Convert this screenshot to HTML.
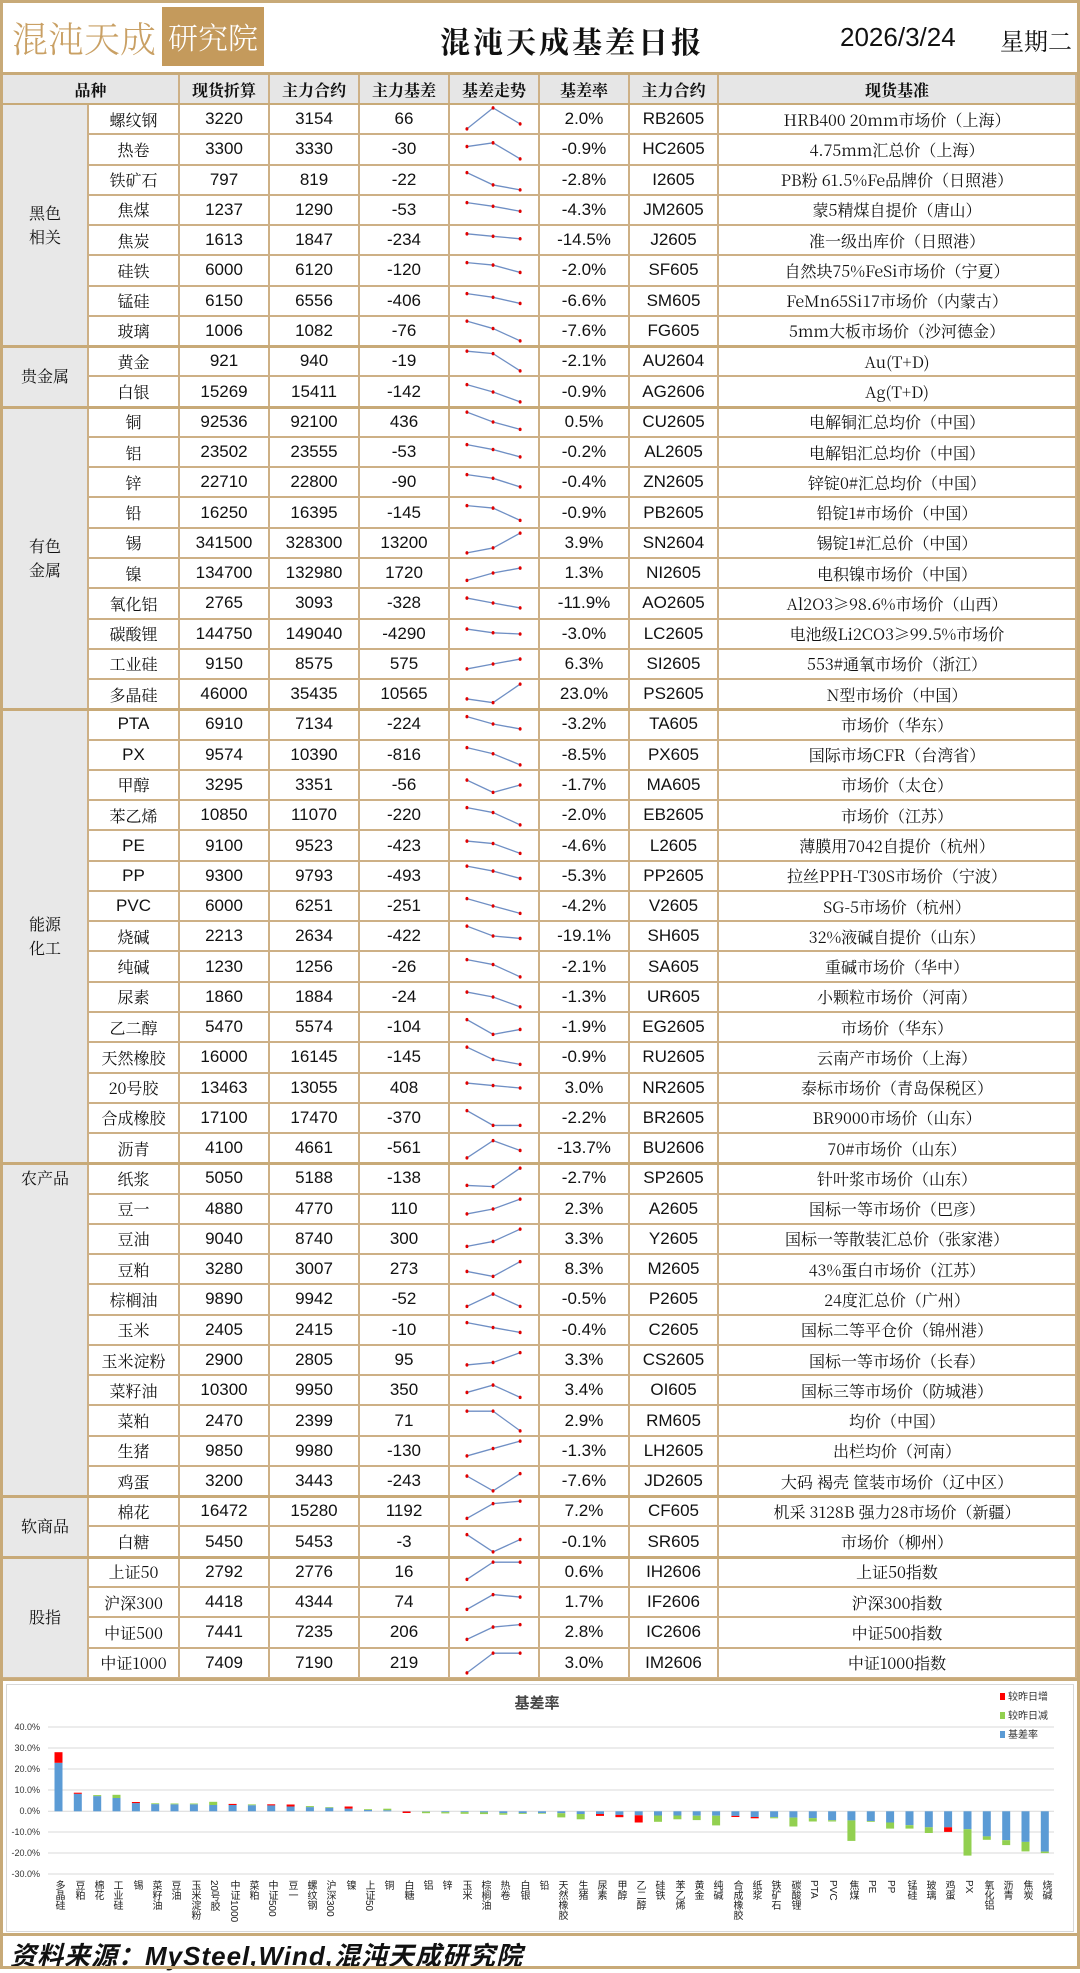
<!DOCTYPE html>
<html><head><meta charset="utf-8">
<style>
*{box-sizing:border-box}
body{margin:0;width:1080px;height:1969px;position:relative;background:#fff;font-family:"Liberation Serif","Noto Serif CJK SC",serif;color:#111;overflow:hidden}
.frame{position:absolute;left:0;top:0;width:1080px;height:1969px;border:3px solid #c8aa78;pointer-events:none;z-index:5}
.hl{position:absolute;left:0;width:1080px;background:#c8aa78;z-index:4}
.logo1{position:absolute;left:12px;top:8px;width:150px;font-size:36px;color:#c9a064;font-family:"Noto Serif CJK SC",serif;letter-spacing:0px;line-height:60px;font-weight:300;white-space:nowrap}
.logo2{position:absolute;left:162px;top:7px;width:102px;height:59px;background:#c49a5c;color:#fff;font-size:30px;line-height:59px;text-align:center;font-family:"Noto Serif CJK SC",serif;font-weight:300;white-space:nowrap}
.title{position:absolute;left:440px;top:18px;font-size:30px;font-weight:bold;font-family:"Noto Serif CJK SC",serif;letter-spacing:3px}
.date{position:absolute;left:840px;top:22px;font-size:26px;font-family:"Liberation Sans Narrow","Liberation Sans",sans-serif}
.week{position:absolute;left:1000px;top:22px;font-size:24px;font-family:"Noto Serif CJK SC",serif}
.grid{position:absolute;left:3px;top:75px;width:1074px;display:grid;grid-template-columns:86px 91px 90px 90px 90px 90px 90px 89px 358px;grid-template-rows:30px repeat(52,30.27px)}
.grid>div{border-right:2px solid #cdb086;border-bottom:2px solid #cdb086;display:flex;align-items:center;justify-content:center;font-size:16px;font-family:"Noto Serif CJK SC",serif;white-space:nowrap;overflow:hidden}
.grid>div.h{background:#e6e6e6;font-weight:bold;font-size:16px}
.grid>div.g{background:#e8e8e8;grid-column:1;text-align:center;line-height:24px;font-size:16px}
.grid>div.n{font-family:"Liberation Sans Narrow","Liberation Sans",sans-serif;font-size:17px}
svg.sp{width:88px;height:28px;display:block}
svg.sp polyline{fill:none;stroke:#6f8fc4;stroke-width:1.2;marker-start:url(#m);marker-mid:url(#m);marker-end:url(#m);transform-origin:45px 15px;transform:scaleY(1.2)}
.sep{position:absolute;left:0;width:1080px;height:3px;background:#c8aa78;z-index:3}
.chart{position:absolute;left:6px;top:1684px;width:1068px;height:248px;border:1px solid #d8d8d8}
.lb{position:absolute;top:1880px;writing-mode:vertical-rl;font-size:10px;line-height:10px;font-family:"Liberation Sans","Noto Sans CJK SC",sans-serif;color:#222;white-space:nowrap}
.foot{position:absolute;left:10px;top:1936px;font-size:26px;font-style:italic;font-weight:bold;font-family:"Liberation Sans Narrow","Liberation Sans","Noto Sans CJK SC",sans-serif;letter-spacing:1px}
</style></head><body>
<svg width="0" height="0" style="position:absolute"><defs><marker id="m" markerWidth="4" markerHeight="4" refX="2" refY="2" markerUnits="userSpaceOnUse"><circle cx="2" cy="2" r="1.6" fill="#e00000"/></marker></defs></svg>
<div class="frame"></div>
<div class="hl" style="top:72px;height:3px"></div>
<div class="logo1">混沌天成</div>
<div class="logo2">研究院</div>
<div class="title">混沌天成基差日报</div>
<div class="date">2026/3/24</div>
<div class="week">星期二</div>

<div class="grid">
<div class="h" style="grid-column:1/3">品种</div><div class="h">现货折算</div><div class="h">主力合约</div><div class="h">主力基差</div><div class="h">基差走势</div><div class="h">基差率</div><div class="h">主力合约</div><div class="h">现货基准</div>
<div class="g" style="grid-row:2/10">黑色<br>相关</div>
<div class="g" style="grid-row:10/12">贵金属</div>
<div class="g" style="grid-row:12/22">有色<br>金属</div>
<div class="g" style="grid-row:22/37">能源<br>化工</div>
<div class="g" style="grid-row:37/48;align-items:flex-start;padding-top:2px">农产品</div>
<div class="g" style="grid-row:48/50">软商品</div>
<div class="g" style="grid-row:50/54">股指</div>

<div>螺纹钢</div><div class="n">3220</div><div class="n">3154</div><div class="n">66</div><div><svg class="sp" viewBox="0 0 90 30"><polyline points="16,23.8 44,5.1 73,19.4"/></svg></div><div class="n">2.0%</div><div class="n">RB2605</div><div>HRB400 20mm市场价（上海）</div>
<div>热卷</div><div class="n">3300</div><div class="n">3330</div><div class="n">-30</div><div><svg class="sp" viewBox="0 0 90 30"><polyline points="16,12.8 44,9.5 73,23.8"/></svg></div><div class="n">-0.9%</div><div class="n">HC2605</div><div>4.75mm汇总价（上海）</div>
<div>铁矿石</div><div class="n">797</div><div class="n">819</div><div class="n">-22</div><div><svg class="sp" viewBox="0 0 90 30"><polyline points="16,8.4 44,19.4 73,23.8"/></svg></div><div class="n">-2.8%</div><div class="n">I2605</div><div>PB粉 61.5%Fe品牌价（日照港）</div>
<div>焦煤</div><div class="n">1237</div><div class="n">1290</div><div class="n">-53</div><div><svg class="sp" viewBox="0 0 90 30"><polyline points="16,8.4 44,11.7 73,16.1"/></svg></div><div class="n">-4.3%</div><div class="n">JM2605</div><div>蒙5精煤自提价（唐山）</div>
<div>焦炭</div><div class="n">1613</div><div class="n">1847</div><div class="n">-234</div><div><svg class="sp" viewBox="0 0 90 30"><polyline points="16,9.5 44,11.7 73,13.9"/></svg></div><div class="n">-14.5%</div><div class="n">J2605</div><div>准一级出库价（日照港）</div>
<div>硅铁</div><div class="n">6000</div><div class="n">6120</div><div class="n">-120</div><div><svg class="sp" viewBox="0 0 90 30"><polyline points="16,8.4 44,10.6 73,17.2"/></svg></div><div class="n">-2.0%</div><div class="n">SF605</div><div>自然块75%FeSi市场价（宁夏）</div>
<div>锰硅</div><div class="n">6150</div><div class="n">6556</div><div class="n">-406</div><div><svg class="sp" viewBox="0 0 90 30"><polyline points="16,8.4 44,11.7 73,17.2"/></svg></div><div class="n">-6.6%</div><div class="n">SM605</div><div>FeMn65Si17市场价（内蒙古）</div>
<div>玻璃</div><div class="n">1006</div><div class="n">1082</div><div class="n">-76</div><div><svg class="sp" viewBox="0 0 90 30"><polyline points="16,6.2 44,12.8 73,23.8"/></svg></div><div class="n">-7.6%</div><div class="n">FG605</div><div>5mm大板市场价（沙河德金）</div>
<div>黄金</div><div class="n">921</div><div class="n">940</div><div class="n">-19</div><div><svg class="sp" viewBox="0 0 90 30"><polyline points="16,6.2 44,8.4 73,23.8"/></svg></div><div class="n">-2.1%</div><div class="n">AU2604</div><div>Au(T+D)</div>
<div>白银</div><div class="n">15269</div><div class="n">15411</div><div class="n">-142</div><div><svg class="sp" viewBox="0 0 90 30"><polyline points="16,8.4 44,15 73,23.8"/></svg></div><div class="n">-0.9%</div><div class="n">AG2606</div><div>Ag(T+D)</div>
<div>铜</div><div class="n">92536</div><div class="n">92100</div><div class="n">436</div><div><svg class="sp" viewBox="0 0 90 30"><polyline points="16,6.2 44,15 73,21.6"/></svg></div><div class="n">0.5%</div><div class="n">CU2605</div><div>电解铜汇总均价（中国）</div>
<div>铝</div><div class="n">23502</div><div class="n">23555</div><div class="n">-53</div><div><svg class="sp" viewBox="0 0 90 30"><polyline points="16,8.4 44,12.8 73,19.4"/></svg></div><div class="n">-0.2%</div><div class="n">AL2605</div><div>电解铝汇总均价（中国）</div>
<div>锌</div><div class="n">22710</div><div class="n">22800</div><div class="n">-90</div><div><svg class="sp" viewBox="0 0 90 30"><polyline points="16,8.4 44,11.7 73,19.4"/></svg></div><div class="n">-0.4%</div><div class="n">ZN2605</div><div>锌锭0#汇总均价（中国）</div>
<div>铅</div><div class="n">16250</div><div class="n">16395</div><div class="n">-145</div><div><svg class="sp" viewBox="0 0 90 30"><polyline points="16,8.4 44,10.6 73,21.6"/></svg></div><div class="n">-0.9%</div><div class="n">PB2605</div><div>铅锭1#市场价（中国）</div>
<div>锡</div><div class="n">341500</div><div class="n">328300</div><div class="n">13200</div><div><svg class="sp" viewBox="0 0 90 30"><polyline points="16,23.8 44,19.4 73,6.2"/></svg></div><div class="n">3.9%</div><div class="n">SN2604</div><div>锡锭1#汇总价（中国）</div>
<div>镍</div><div class="n">134700</div><div class="n">132980</div><div class="n">1720</div><div><svg class="sp" viewBox="0 0 90 30"><polyline points="16,21.6 44,15 73,10.6"/></svg></div><div class="n">1.3%</div><div class="n">NI2605</div><div>电积镍市场价（中国）</div>
<div>氧化铝</div><div class="n">2765</div><div class="n">3093</div><div class="n">-328</div><div><svg class="sp" viewBox="0 0 90 30"><polyline points="16,10.6 44,15 73,19.4"/></svg></div><div class="n">-11.9%</div><div class="n">AO2605</div><div>Al2O3≥98.6%市场价（山西）</div>
<div>碳酸锂</div><div class="n">144750</div><div class="n">149040</div><div class="n">-4290</div><div><svg class="sp" viewBox="0 0 90 30"><polyline points="16,10.6 44,13.9 73,15"/></svg></div><div class="n">-3.0%</div><div class="n">LC2605</div><div>电池级Li2CO3≥99.5%市场价</div>
<div>工业硅</div><div class="n">9150</div><div class="n">8575</div><div class="n">575</div><div><svg class="sp" viewBox="0 0 90 30"><polyline points="16,19.4 44,15 73,10.6"/></svg></div><div class="n">6.3%</div><div class="n">SI2605</div><div>553#通氧市场价（浙江）</div>
<div>多晶硅</div><div class="n">46000</div><div class="n">35435</div><div class="n">10565</div><div><svg class="sp" viewBox="0 0 90 30"><polyline points="16,19.4 44,22.7 73,6.2"/></svg></div><div class="n">23.0%</div><div class="n">PS2605</div><div>N型市场价（中国）</div>
<div class="n">PTA</div><div class="n">6910</div><div class="n">7134</div><div class="n">-224</div><div><svg class="sp" viewBox="0 0 90 30"><polyline points="16,8.4 44,15 73,19.4"/></svg></div><div class="n">-3.2%</div><div class="n">TA605</div><div>市场价（华东）</div>
<div class="n">PX</div><div class="n">9574</div><div class="n">10390</div><div class="n">-816</div><div><svg class="sp" viewBox="0 0 90 30"><polyline points="16,8.4 44,13.9 73,23.8"/></svg></div><div class="n">-8.5%</div><div class="n">PX605</div><div>国际市场CFR（台湾省）</div>
<div>甲醇</div><div class="n">3295</div><div class="n">3351</div><div class="n">-56</div><div><svg class="sp" viewBox="0 0 90 30"><polyline points="16,10.6 44,21.6 73,15"/></svg></div><div class="n">-1.7%</div><div class="n">MA605</div><div>市场价（太仓）</div>
<div>苯乙烯</div><div class="n">10850</div><div class="n">11070</div><div class="n">-220</div><div><svg class="sp" viewBox="0 0 90 30"><polyline points="16,8.4 44,12.8 73,23.8"/></svg></div><div class="n">-2.0%</div><div class="n">EB2605</div><div>市场价（江苏）</div>
<div class="n">PE</div><div class="n">9100</div><div class="n">9523</div><div class="n">-423</div><div><svg class="sp" viewBox="0 0 90 30"><polyline points="16,10.6 44,12.8 73,21.6"/></svg></div><div class="n">-4.6%</div><div class="n">L2605</div><div>薄膜用7042自提价（杭州）</div>
<div class="n">PP</div><div class="n">9300</div><div class="n">9793</div><div class="n">-493</div><div><svg class="sp" viewBox="0 0 90 30"><polyline points="16,6.2 44,10.6 73,17.2"/></svg></div><div class="n">-5.3%</div><div class="n">PP2605</div><div>拉丝PPH-T30S市场价（宁波）</div>
<div class="n">PVC</div><div class="n">6000</div><div class="n">6251</div><div class="n">-251</div><div><svg class="sp" viewBox="0 0 90 30"><polyline points="16,8.4 44,15 73,21.6"/></svg></div><div class="n">-4.2%</div><div class="n">V2605</div><div>SG-5市场价（杭州）</div>
<div>烧碱</div><div class="n">2213</div><div class="n">2634</div><div class="n">-422</div><div><svg class="sp" viewBox="0 0 90 30"><polyline points="16,6.2 44,15 73,17.2"/></svg></div><div class="n">-19.1%</div><div class="n">SH605</div><div>32%液碱自提价（山东）</div>
<div>纯碱</div><div class="n">1230</div><div class="n">1256</div><div class="n">-26</div><div><svg class="sp" viewBox="0 0 90 30"><polyline points="16,8.4 44,12.8 73,23.8"/></svg></div><div class="n">-2.1%</div><div class="n">SA605</div><div>重碱市场价（华中）</div>
<div>尿素</div><div class="n">1860</div><div class="n">1884</div><div class="n">-24</div><div><svg class="sp" viewBox="0 0 90 30"><polyline points="16,10.6 44,15 73,23.8"/></svg></div><div class="n">-1.3%</div><div class="n">UR605</div><div>小颗粒市场价（河南）</div>
<div>乙二醇</div><div class="n">5470</div><div class="n">5574</div><div class="n">-104</div><div><svg class="sp" viewBox="0 0 90 30"><polyline points="16,8.4 44,21.6 73,17.2"/></svg></div><div class="n">-1.9%</div><div class="n">EG2605</div><div>市场价（华东）</div>
<div>天然橡胶</div><div class="n">16000</div><div class="n">16145</div><div class="n">-145</div><div><svg class="sp" viewBox="0 0 90 30"><polyline points="16,6.2 44,17.2 73,21.6"/></svg></div><div class="n">-0.9%</div><div class="n">RU2605</div><div>云南产市场价（上海）</div>
<div>20号胶</div><div class="n">13463</div><div class="n">13055</div><div class="n">408</div><div><svg class="sp" viewBox="0 0 90 30"><polyline points="16,10.6 44,12.8 73,15"/></svg></div><div class="n">3.0%</div><div class="n">NR2605</div><div>泰标市场价（青岛保税区）</div>
<div>合成橡胶</div><div class="n">17100</div><div class="n">17470</div><div class="n">-370</div><div><svg class="sp" viewBox="0 0 90 30"><polyline points="16,8.4 44,21.6 73,21.6"/></svg></div><div class="n">-2.2%</div><div class="n">BR2605</div><div>BR9000市场价（山东）</div>
<div>沥青</div><div class="n">4100</div><div class="n">4661</div><div class="n">-561</div><div><svg class="sp" viewBox="0 0 90 30"><polyline points="16,23.8 44,8.4 73,17.2"/></svg></div><div class="n">-13.7%</div><div class="n">BU2606</div><div>70#市场价（山东）</div>
<div>纸浆</div><div class="n">5050</div><div class="n">5188</div><div class="n">-138</div><div><svg class="sp" viewBox="0 0 90 30"><polyline points="16,21.6 44,22.7 73,6.2"/></svg></div><div class="n">-2.7%</div><div class="n">SP2605</div><div>针叶浆市场价（山东）</div>
<div>豆一</div><div class="n">4880</div><div class="n">4770</div><div class="n">110</div><div><svg class="sp" viewBox="0 0 90 30"><polyline points="16,19.4 44,15 73,6.2"/></svg></div><div class="n">2.3%</div><div class="n">A2605</div><div>国标一等市场价（巴彦）</div>
<div>豆油</div><div class="n">9040</div><div class="n">8740</div><div class="n">300</div><div><svg class="sp" viewBox="0 0 90 30"><polyline points="16,21.6 44,17.2 73,6.2"/></svg></div><div class="n">3.3%</div><div class="n">Y2605</div><div>国标一等散装汇总价（张家港）</div>
<div>豆粕</div><div class="n">3280</div><div class="n">3007</div><div class="n">273</div><div><svg class="sp" viewBox="0 0 90 30"><polyline points="16,17.2 44,21.6 73,8.4"/></svg></div><div class="n">8.3%</div><div class="n">M2605</div><div>43%蛋白市场价（江苏）</div>
<div>棕榈油</div><div class="n">9890</div><div class="n">9942</div><div class="n">-52</div><div><svg class="sp" viewBox="0 0 90 30"><polyline points="16,21.6 44,10.6 73,21.6"/></svg></div><div class="n">-0.5%</div><div class="n">P2605</div><div>24度汇总价（广州）</div>
<div>玉米</div><div class="n">2405</div><div class="n">2415</div><div class="n">-10</div><div><svg class="sp" viewBox="0 0 90 30"><polyline points="16,8.4 44,12.8 73,17.2"/></svg></div><div class="n">-0.4%</div><div class="n">C2605</div><div>国标二等平仓价（锦州港）</div>
<div>玉米淀粉</div><div class="n">2900</div><div class="n">2805</div><div class="n">95</div><div><svg class="sp" viewBox="0 0 90 30"><polyline points="16,19.4 44,17.2 73,8.4"/></svg></div><div class="n">3.3%</div><div class="n">CS2605</div><div>国标一等市场价（长春）</div>
<div>菜籽油</div><div class="n">10300</div><div class="n">9950</div><div class="n">350</div><div><svg class="sp" viewBox="0 0 90 30"><polyline points="16,17.2 44,10.6 73,21.6"/></svg></div><div class="n">3.4%</div><div class="n">OI605</div><div>国标三等市场价（防城港）</div>
<div>菜粕</div><div class="n">2470</div><div class="n">2399</div><div class="n">71</div><div><svg class="sp" viewBox="0 0 90 30"><polyline points="16,6.2 44,6.2 73,23.8"/></svg></div><div class="n">2.9%</div><div class="n">RM605</div><div>均价（中国）</div>
<div>生猪</div><div class="n">9850</div><div class="n">9980</div><div class="n">-130</div><div><svg class="sp" viewBox="0 0 90 30"><polyline points="16,19.4 44,12.8 73,6.2"/></svg></div><div class="n">-1.3%</div><div class="n">LH2605</div><div>出栏均价（河南）</div>
<div>鸡蛋</div><div class="n">3200</div><div class="n">3443</div><div class="n">-243</div><div><svg class="sp" viewBox="0 0 90 30"><polyline points="16,10.6 44,23.8 73,8.4"/></svg></div><div class="n">-7.6%</div><div class="n">JD2605</div><div>大码 褐壳 筐装市场价（辽中区）</div>
<div>棉花</div><div class="n">16472</div><div class="n">15280</div><div class="n">1192</div><div><svg class="sp" viewBox="0 0 90 30"><polyline points="16,21.6 44,8.4 73,6.2"/></svg></div><div class="n">7.2%</div><div class="n">CF605</div><div>机采 3128B 强力28市场价（新疆）</div>
<div>白糖</div><div class="n">5450</div><div class="n">5453</div><div class="n">-3</div><div><svg class="sp" viewBox="0 0 90 30"><polyline points="16,8.4 44,23.8 73,12.8"/></svg></div><div class="n">-0.1%</div><div class="n">SR605</div><div>市场价（柳州）</div>
<div>上证50</div><div class="n">2792</div><div class="n">2776</div><div class="n">16</div><div><svg class="sp" viewBox="0 0 90 30"><polyline points="16,21.6 44,6.2 73,6.2"/></svg></div><div class="n">0.6%</div><div class="n">IH2606</div><div>上证50指数</div>
<div>沪深300</div><div class="n">4418</div><div class="n">4344</div><div class="n">74</div><div><svg class="sp" viewBox="0 0 90 30"><polyline points="16,21.6 44,8.4 73,10.6"/></svg></div><div class="n">1.7%</div><div class="n">IF2606</div><div>沪深300指数</div>
<div>中证500</div><div class="n">7441</div><div class="n">7235</div><div class="n">206</div><div><svg class="sp" viewBox="0 0 90 30"><polyline points="16,21.6 44,10.6 73,8.4"/></svg></div><div class="n">2.8%</div><div class="n">IC2606</div><div>中证500指数</div>
<div>中证1000</div><div class="n">7409</div><div class="n">7190</div><div class="n">219</div><div><svg class="sp" viewBox="0 0 90 30"><polyline points="16,23.8 44,6.2 73,6.2"/></svg></div><div class="n">3.0%</div><div class="n">IM2606</div><div>中证1000指数</div>
</div>

<div class="sep" style="top:103px;height:2px"></div>
<div class="sep" style="top:345px"></div>
<div class="sep" style="top:406px"></div>
<div class="sep" style="top:708px"></div>
<div class="sep" style="top:1162px"></div>
<div class="sep" style="top:1495px"></div>
<div class="sep" style="top:1556px"></div>
<div class="sep" style="top:1678px"></div>
<div class="sep" style="top:1933px"></div>

<div class="chart"></div>
<svg style="position:absolute;left:0;top:1681px" width="1080" height="254" viewBox="0 1681 1080 254">
<g stroke="#d9d9d9" stroke-width="1">
<line x1="48" x2="1054" y1="1727" y2="1727"/><line x1="48" x2="1054" y1="1748" y2="1748"/><line x1="48" x2="1054" y1="1769" y2="1769"/><line x1="48" x2="1054" y1="1790" y2="1790"/><line x1="48" x2="1054" y1="1811.3" y2="1811.3"/><line x1="48" x2="1054" y1="1832" y2="1832"/><line x1="48" x2="1054" y1="1853" y2="1853"/><line x1="48" x2="1054" y1="1874" y2="1874"/>
</g>
<g font-family="Liberation Sans Narrow, Liberation Sans, sans-serif" font-size="9" fill="#333" text-anchor="end">
<text x="40" y="1730">40.0%</text><text x="40" y="1751">30.0%</text><text x="40" y="1772">20.0%</text><text x="40" y="1793">10.0%</text><text x="40" y="1814">0.0%</text><text x="40" y="1835">-10.0%</text><text x="40" y="1856">-20.0%</text><text x="40" y="1877">-30.0%</text>
</g>
<text x="537" y="1708" font-size="15" font-weight="bold" text-anchor="middle" font-family="Noto Sans CJK SC, sans-serif" fill="#444">基差率</text>
<rect x="1000" y="1693" width="5" height="7" fill="#ff0000"/><text x="1008" y="1700" font-size="10" font-family="Noto Sans CJK SC, sans-serif" fill="#333">较昨日增</text>
<rect x="1000" y="1712" width="5" height="7" fill="#92d050"/><text x="1008" y="1719" font-size="10" font-family="Noto Sans CJK SC, sans-serif" fill="#333">较昨日减</text>
<rect x="1000" y="1731" width="5" height="7" fill="#5b9bd5"/><text x="1008" y="1738" font-size="10" font-family="Noto Sans CJK SC, sans-serif" fill="#333">基差率</text>
<g fill="#5b9bd5">
<rect x="54.5" y="1762.8" width="8" height="48.5"/><rect x="73.8" y="1793.8" width="8" height="17.5"/><rect x="93.2" y="1796.1" width="8" height="15.2"/><rect x="112.5" y="1798" width="8" height="13.3"/><rect x="131.9" y="1803.1" width="8" height="8.2"/><rect x="151.2" y="1804.1" width="8" height="7.2"/><rect x="170.5" y="1804.3" width="8" height="7"/><rect x="189.9" y="1804.3" width="8" height="7"/><rect x="209.2" y="1805" width="8" height="6.3"/><rect x="228.6" y="1805" width="8" height="6.3"/><rect x="247.9" y="1805.2" width="8" height="6.1"/><rect x="267.2" y="1805.4" width="8" height="5.9"/><rect x="286.6" y="1806.5" width="8" height="4.8"/><rect x="305.9" y="1807.1" width="8" height="4.2"/><rect x="325.3" y="1807.7" width="8" height="3.6"/><rect x="344.6" y="1808.6" width="8" height="2.7"/><rect x="364" y="1810" width="8" height="1.3"/><rect x="383.3" y="1810.2" width="8" height="1.1"/>
<rect x="402.6" y="1811.3" width="8" height="0.2"/><rect x="422" y="1811.3" width="8" height="0.4"/><rect x="441.3" y="1811.3" width="8" height="0.8"/><rect x="460.6" y="1811.3" width="8" height="0.8"/><rect x="480" y="1811.3" width="8" height="1.1"/><rect x="499.3" y="1811.3" width="8" height="1.9"/><rect x="518.7" y="1811.3" width="8" height="1.9"/><rect x="538" y="1811.3" width="8" height="1.9"/><rect x="557.3" y="1811.3" width="8" height="1.9"/><rect x="576.7" y="1811.3" width="8" height="2.7"/><rect x="596" y="1811.3" width="8" height="2.7"/><rect x="615.4" y="1811.3" width="8" height="3.6"/><rect x="634.7" y="1811.3" width="8" height="4"/><rect x="654" y="1811.3" width="8" height="4.2"/><rect x="673.4" y="1811.3" width="8" height="4.2"/><rect x="692.7" y="1811.3" width="8" height="4.4"/><rect x="712.1" y="1811.3" width="8" height="4.4"/><rect x="731.4" y="1811.3" width="8" height="4.6"/><rect x="750.7" y="1811.3" width="8" height="5.7"/><rect x="770.1" y="1811.3" width="8" height="5.9"/><rect x="789.4" y="1811.3" width="8" height="6.3"/><rect x="808.8" y="1811.3" width="8" height="6.8"/><rect x="828.1" y="1811.3" width="8" height="8.9"/><rect x="847.4" y="1811.3" width="8" height="9.1"/><rect x="866.8" y="1811.3" width="8" height="9.7"/><rect x="886.1" y="1811.3" width="8" height="11.2"/><rect x="905.5" y="1811.3" width="8" height="13.9"/><rect x="924.8" y="1811.3" width="8" height="16"/><rect x="944.1" y="1811.3" width="8" height="16"/><rect x="963.5" y="1811.3" width="8" height="17.9"/><rect x="982.8" y="1811.3" width="8" height="25.1"/><rect x="1002.2" y="1811.3" width="8" height="28.9"/><rect x="1021.5" y="1811.3" width="8" height="30.6"/><rect x="1040.8" y="1811.3" width="8" height="40.3"/>
</g>
<g fill="#ff0000">
<rect x="54.5" y="1752.2" width="8" height="10.6"/><rect x="73.8" y="1792.7" width="8" height="1.1"/><rect x="131.9" y="1802" width="8" height="1.1"/><rect x="228.6" y="1803.9" width="8" height="1.1"/><rect x="267.2" y="1804.3" width="8" height="1.1"/><rect x="286.6" y="1804.5" width="8" height="2"/><rect x="344.6" y="1806.5" width="8" height="2.1"/>
<rect x="402.6" y="1811.5" width="8" height="1.5"/><rect x="596" y="1814" width="8" height="1.9"/><rect x="615.4" y="1814.9" width="8" height="2.3"/><rect x="634.7" y="1815.3" width="8" height="7.2"/><rect x="731.4" y="1815.9" width="8" height="1.1"/><rect x="750.7" y="1817" width="8" height="1.3"/><rect x="944.1" y="1827.3" width="8" height="4.6"/>
</g>
<g fill="#92d050">
<rect x="93.2" y="1795.1" width="8" height="1"/><rect x="112.5" y="1794.8" width="8" height="3.2"/><rect x="151.2" y="1803.3" width="8" height="0.8"/><rect x="170.5" y="1803.5" width="8" height="0.8"/><rect x="189.9" y="1803.5" width="8" height="0.8"/><rect x="209.2" y="1801.8" width="8" height="3.2"/><rect x="247.9" y="1804.4" width="8" height="0.8"/><rect x="305.9" y="1806.1" width="8" height="1"/><rect x="325.3" y="1807.1" width="8" height="0.6"/><rect x="364" y="1809.2" width="8" height="0.8"/><rect x="383.3" y="1808.7" width="8" height="1.5"/>
<rect x="422" y="1811.7" width="8" height="1.5"/><rect x="441.3" y="1812.1" width="8" height="1.3"/><rect x="460.6" y="1812.1" width="8" height="1.7"/><rect x="480" y="1812.4" width="8" height="1.7"/><rect x="499.3" y="1813.2" width="8" height="1.5"/><rect x="518.7" y="1813.2" width="8" height="0.8"/><rect x="538" y="1813.2" width="8" height="0.6"/><rect x="557.3" y="1813.2" width="8" height="4.2"/><rect x="576.7" y="1814" width="8" height="5.3"/><rect x="654" y="1815.5" width="8" height="6.3"/><rect x="673.4" y="1815.5" width="8" height="3.8"/><rect x="692.7" y="1815.7" width="8" height="4.4"/><rect x="712.1" y="1815.7" width="8" height="9.7"/><rect x="770.1" y="1817.2" width="8" height="1.1"/><rect x="789.4" y="1817.6" width="8" height="8.9"/><rect x="808.8" y="1818.1" width="8" height="3.4"/><rect x="828.1" y="1820.2" width="8" height="1.3"/><rect x="847.4" y="1820.4" width="8" height="20.5"/><rect x="866.8" y="1821" width="8" height="0.8"/><rect x="886.1" y="1822.5" width="8" height="6.1"/><rect x="905.5" y="1825.2" width="8" height="3.4"/><rect x="924.8" y="1827.3" width="8" height="5.7"/><rect x="963.5" y="1829.2" width="8" height="26.4"/><rect x="982.8" y="1836.4" width="8" height="3.4"/><rect x="1002.2" y="1840.2" width="8" height="4.9"/><rect x="1021.5" y="1841.9" width="8" height="9.5"/><rect x="1040.8" y="1851.6" width="8" height="1.5"/>
</g>
</svg>
<div class="lb" style="left:53px">多晶硅</div><div class="lb" style="left:73px">豆粕</div><div class="lb" style="left:92px">棉花</div><div class="lb" style="left:111px">工业硅</div><div class="lb" style="left:131px">锡</div><div class="lb" style="left:150px">菜籽油</div><div class="lb" style="left:169px">豆油</div><div class="lb" style="left:189px">玉米淀粉</div><div class="lb" style="left:208px">20号胶</div><div class="lb" style="left:228px">中证1000</div><div class="lb" style="left:247px">菜粕</div><div class="lb" style="left:266px">中证500</div><div class="lb" style="left:286px">豆一</div><div class="lb" style="left:305px">螺纹钢</div><div class="lb" style="left:324px">沪深300</div><div class="lb" style="left:344px">镍</div><div class="lb" style="left:363px">上证50</div><div class="lb" style="left:382px">铜</div><div class="lb" style="left:402px">白糖</div><div class="lb" style="left:421px">铝</div><div class="lb" style="left:440px">锌</div><div class="lb" style="left:460px">玉米</div><div class="lb" style="left:479px">棕榈油</div><div class="lb" style="left:498px">热卷</div><div class="lb" style="left:518px">白银</div><div class="lb" style="left:537px">铅</div><div class="lb" style="left:556px">天然橡胶</div><div class="lb" style="left:576px">生猪</div><div class="lb" style="left:595px">尿素</div><div class="lb" style="left:615px">甲醇</div><div class="lb" style="left:634px">乙二醇</div><div class="lb" style="left:653px">硅铁</div><div class="lb" style="left:673px">苯乙烯</div><div class="lb" style="left:692px">黄金</div><div class="lb" style="left:711px">纯碱</div><div class="lb" style="left:731px">合成橡胶</div><div class="lb" style="left:750px">纸浆</div><div class="lb" style="left:769px">铁矿石</div><div class="lb" style="left:789px">碳酸锂</div><div class="lb" style="left:808px">PTA</div><div class="lb" style="left:827px">PVC</div><div class="lb" style="left:847px">焦煤</div><div class="lb" style="left:866px">PE</div><div class="lb" style="left:885px">PP</div><div class="lb" style="left:905px">锰硅</div><div class="lb" style="left:924px">玻璃</div><div class="lb" style="left:943px">鸡蛋</div><div class="lb" style="left:963px">PX</div><div class="lb" style="left:982px">氧化铝</div><div class="lb" style="left:1001px">沥青</div><div class="lb" style="left:1021px">焦炭</div><div class="lb" style="left:1040px">烧碱</div>

<div class="foot">资料来源：MySteel,Wind,混沌天成研究院</div>
</body></html>
